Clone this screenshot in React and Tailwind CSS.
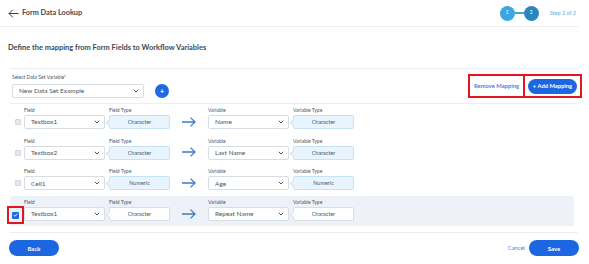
import React from "react";

const rows = [
  { field: "Textbox1", fieldType: "Character", variable: "Name", varType: "Character" },
  { field: "Textbox2", fieldType: "Character", variable: "Last Name", varType: "Character" },
  { field: "Cell1", fieldType: "Numeric", variable: "Age", varType: "Numeric" },
  { field: "Textbox1", fieldType: "Character", variable: "Repeat Name", varType: "Character", selected: true },
];

function Chevron() {
  return (
    <svg width="6" height="4" viewBox="0 0 6 4" className="ml-auto">
      <path d="M0.8 0.8 L3 3 L5.2 0.8" fill="none" stroke="#374151" strokeWidth="0.9" />
    </svg>
  );
}

function SelectBox({ value, className }) {
  return (
    <div
      className={`flex items-center h-[14px] rounded-[2px] border border-[#d7dde5] bg-white pl-[6px] pr-[4px] text-[6.5px] text-[#4b5563] ${className}`}
    >
      <span>{value}</span>
      <Chevron />
    </div>
  );
}

// read-only type pill with the little notch on its left edge
function TypeBox({ value, selected }) {
  return (
    <div
      className={`relative flex items-center justify-center w-[61px] h-[14px] rounded-[2px] border text-[5.5px] text-[#4b5563] ${
        selected ? "bg-white border-[#d7dde5]" : "bg-[#e9f5fe] border-[#c6e2f6]"
      }`}
    >
      <span
        className={`absolute left-[-3px] top-[4px] w-[5px] h-[5px] rotate-45 border-l border-b ${
          selected ? "bg-white border-[#d7dde5]" : "bg-[#e9f5fe] border-[#c6e2f6]"
        }`}
      />
      {value}
    </div>
  );
}

function Label({ children }) {
  return <p className="text-[5px] leading-[6px] text-[#4b5563] mb-[2px]">{children}</p>;
}

export default function App() {
  return (
    <div
      className="w-[589px] h-[264px] bg-white overflow-hidden"
      style={{ fontFamily: "Lato, 'Noto Sans', sans-serif" }}
    >
      {/* Header */}
      <div className="flex items-center h-[27px] w-[578px] border-b border-[#eceef1]">
        <svg width="11" height="9" viewBox="0 0 11 9" className="ml-[8px]">
          <path d="M10.5 4.5 H1 M4.8 0.7 L1 4.5 L4.8 8.3" fill="none" stroke="#374151" strokeWidth="1" />
        </svg>
        <span className="ml-[3px] text-[7.3px] font-bold text-[#3f4753]">Form Data Lookup</span>

        <div className="ml-auto flex items-center">
          <div className="flex items-center justify-center w-[15px] h-[15px] rounded-full bg-[#3aa6e2] text-[5px] text-white">1</div>
          <div className="w-[9px] h-[1.5px] bg-[#3aa6e2]" />
          <div className="flex items-center justify-center w-[15px] h-[15px] rounded-full bg-[#2b86bf] text-[5px] text-white">2</div>
          <span className="ml-[11px] mr-[2px] text-[5.5px] text-[#6aaee0]">Step 2 of 2</span>
        </div>
      </div>

      <h1 className="ml-[8px] mt-[16px] text-[7.45px] leading-[10px] font-bold text-[#3f4753]">
        Define the mapping from Form Fields to Workflow Variables
      </h1>

      {/* Mapping section */}
      <div className="ml-[10px] mt-[15px] w-[568px] border-t border-b border-[#eceef1] pb-[6px]">
        <div className="flex items-start justify-between h-[35px] border-b border-[#eceef1]">
          <div className="pl-[2px] pt-[5px]">
            <Label>Select Data Set Variable*</Label>
            <div className="flex items-center">
              <SelectBox value="New Data Set Example" className="w-[132px] mt-[1px]" />
              <div className="ml-[11px] mt-[2px] flex items-center justify-center w-[14px] h-[14px] rounded-full bg-[#1d6ae5] text-white text-[8px] leading-none font-bold">
                +
              </div>
            </div>
          </div>

          <div className="flex items-center mt-[5px] mr-[-4px]">
            <div className="flex items-center justify-center w-[57px] h-[24px] border-2 border-[#e3151f] text-[5.8px] font-bold text-[#4c7fe0]">
              Remove Mapping
            </div>
            <div className="flex items-center justify-center w-[57px] h-[24px] border-2 border-l-0 border-[#e3151f]">
              <div className="flex items-center justify-center w-[49px] h-[15px] rounded-full bg-[#1d66e1] text-[5.8px] font-bold text-white">
                + Add Mapping
              </div>
            </div>
          </div>
        </div>

        <div className="w-[564px] flex flex-col gap-[0.7px]">
          {rows.map((r, i) => (
            <div
              key={i}
              className={`flex items-end h-[30px] pb-[5px] rounded-[3px] ${r.selected ? "bg-[#eef2f8]" : ""}`}
            >
              <div className="w-[14px] h-[14px] flex items-center justify-center relative">
                {r.selected ? (
                  <div className="absolute left-[-3px] top-[-1px] flex items-center justify-center w-[17px] h-[18px] border-2 border-[#e3151f]">
                    <div className="flex items-center justify-center w-[7px] h-[7px] rounded-[1px] bg-[#1d6ae5]">
                      <svg width="5" height="4" viewBox="0 0 5 4">
                        <path d="M0.6 2 L2 3.3 L4.4 0.7" fill="none" stroke="white" strokeWidth="0.9" />
                      </svg>
                    </div>
                  </div>
                ) : (
                  <div className="w-[6px] h-[6px] ml-[1px] rounded-[1px] bg-[#e5e7eb] border border-[#d4d8de]" />
                )}
              </div>

              <div>
                <Label>Field</Label>
                <SelectBox value={r.field} className="w-[81px]" />
              </div>
              <div className="ml-[4px]">
                <Label>Field Type</Label>
                <TypeBox value={r.fieldType} selected={r.selected} />
              </div>

              <div className="ml-[12px] mb-[1px] h-[13px] flex items-center">
                <svg width="14" height="10" viewBox="0 0 14 10">
                  <path d="M0 5 H13 M8.5 0.6 L13 5 L8.5 9.4" fill="none" stroke="#3b7cc9" strokeWidth="1.3" />
                </svg>
              </div>

              <div className="ml-[12px]">
                <Label>Variable</Label>
                <SelectBox value={r.variable} className="w-[81px]" />
              </div>
              <div className="ml-[4px]">
                <Label>Variable Type</Label>
                <TypeBox value={r.varType} selected={r.selected} />
              </div>
            </div>
          ))}
        </div>
      </div>

      {/* Footer */}
      <div className="flex items-center mt-[7px] w-[579px]">
        <button className="ml-[9px] w-[50px] h-[16px] rounded-full bg-[#1d66e1] text-[6px] font-bold text-white">
          Back
        </button>
        <span className="ml-auto text-[5.8px] text-[#4c7fe0]">Cancel</span>
        <button className="ml-[4px] w-[50px] h-[16px] rounded-full bg-[#1d66e1] text-[6px] font-bold text-white">
          Save
        </button>
      </div>
    </div>
  );
}
